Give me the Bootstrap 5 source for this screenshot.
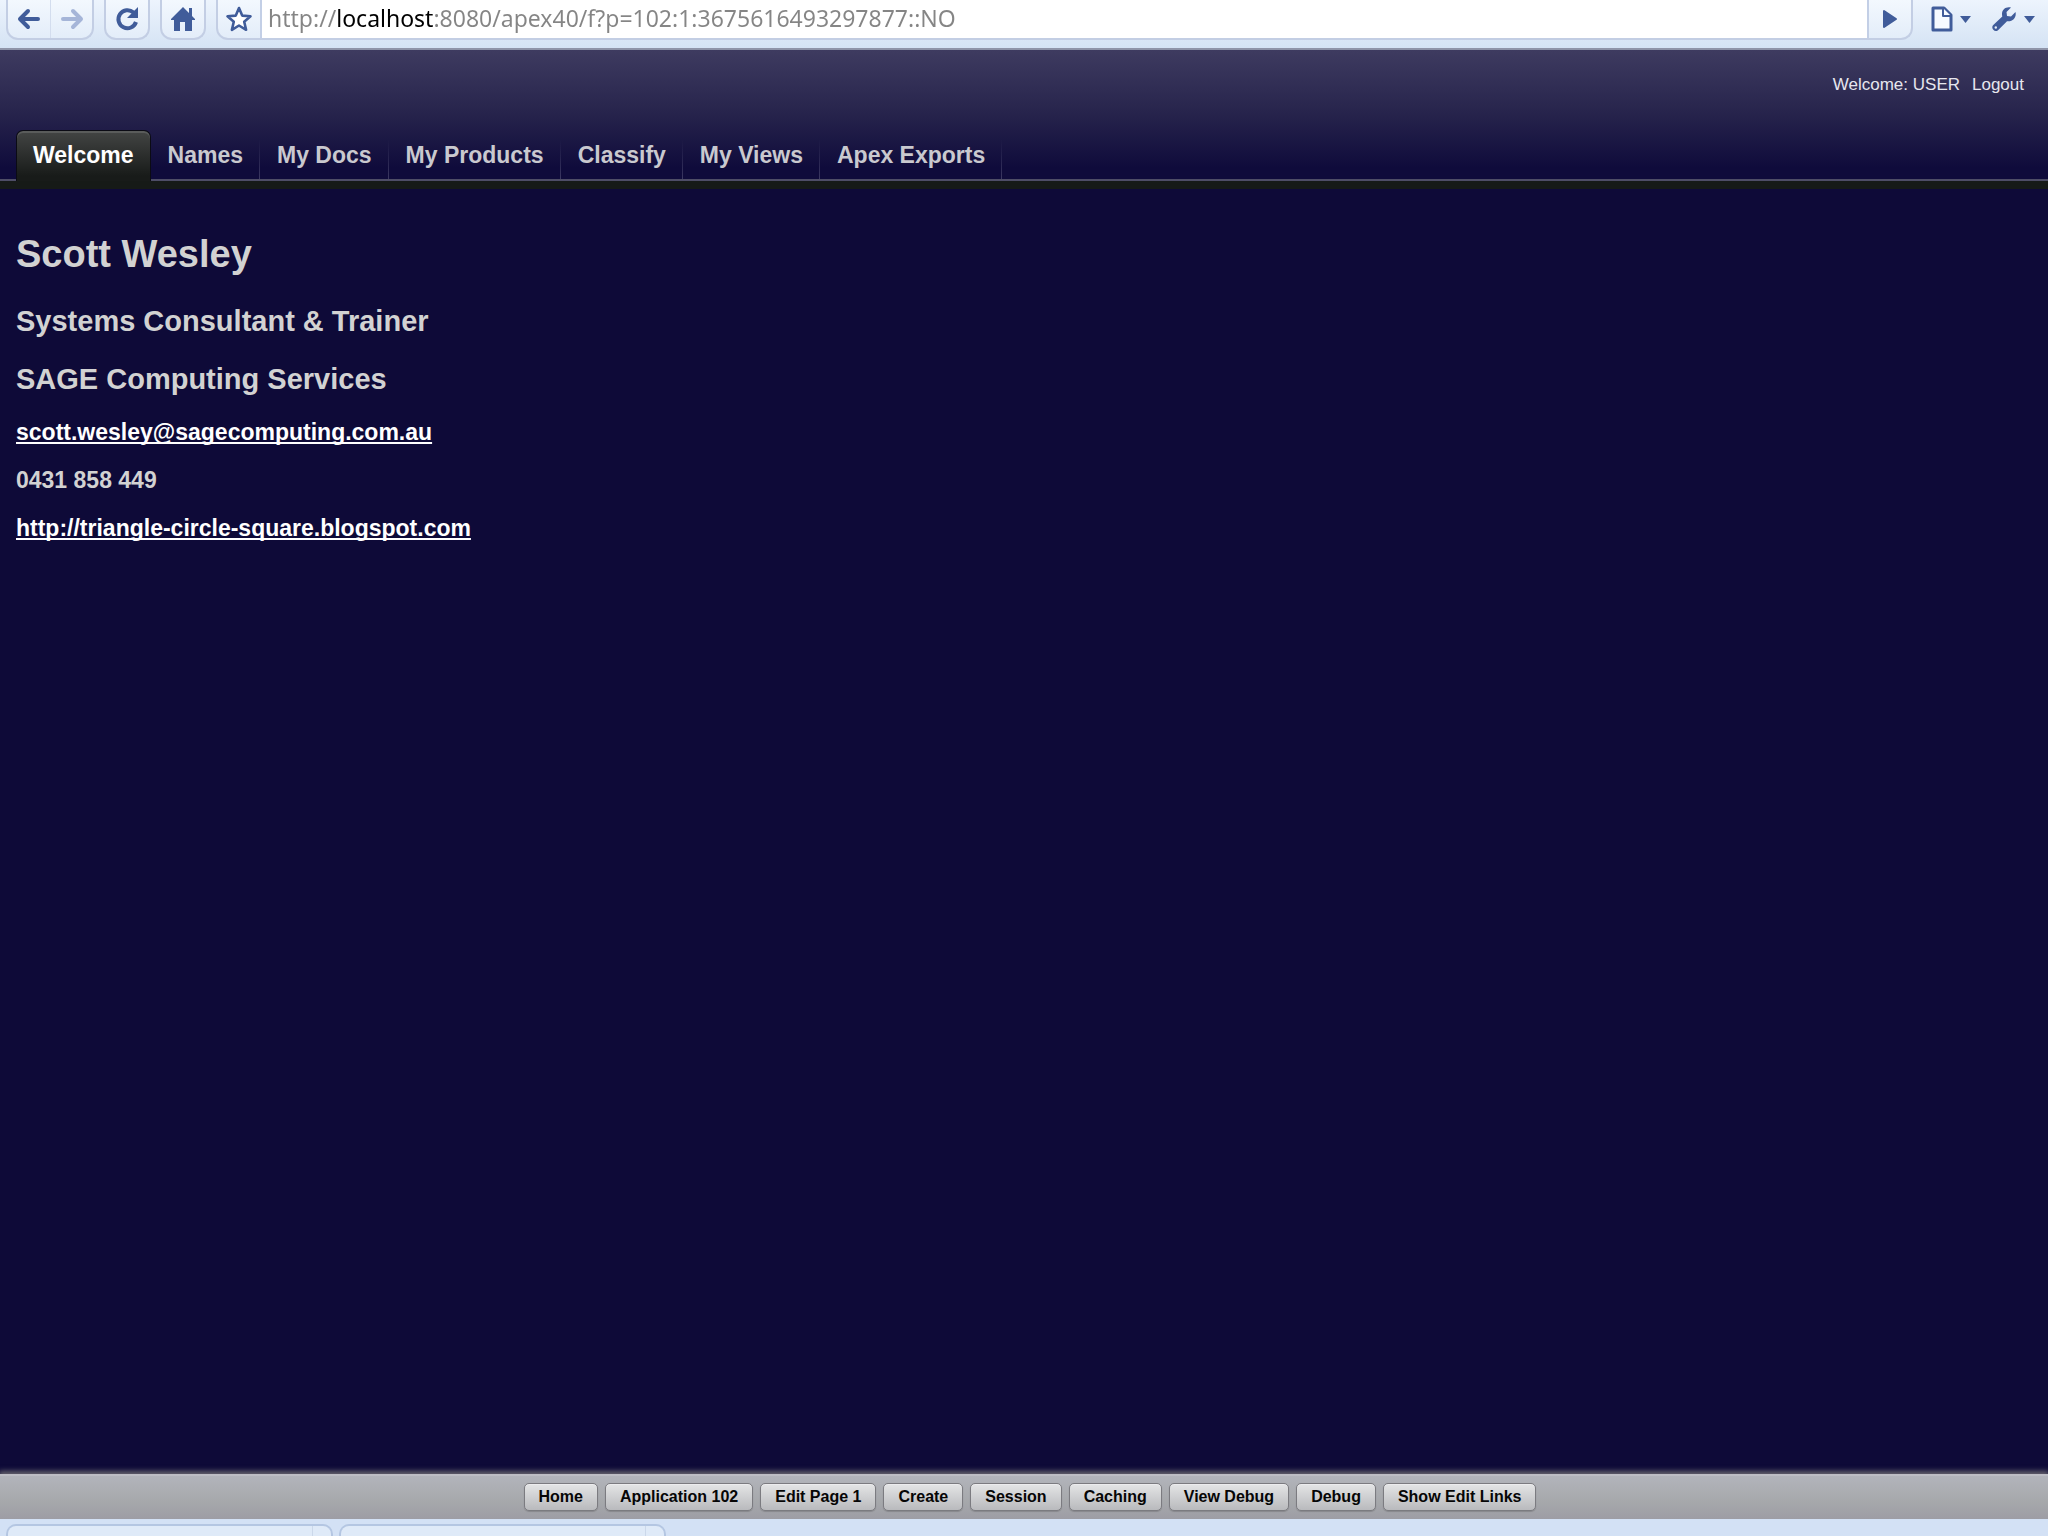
<!DOCTYPE html>
<html lang="en">
<head>
<meta charset="utf-8">
<meta name="viewport" content="width=device-width, initial-scale=1">
<title>Welcome</title>
<link href="https://cdn.jsdelivr.net/npm/bootstrap@5.3.0/dist/css/bootstrap.min.css" rel="stylesheet">
<style>
  body { font-family: "Liberation Sans", Arial, sans-serif; background: #0e0a38; color: #d2d2d2; }

  /* browser toolbar */
  .chrome-bar { height: 50px; background: linear-gradient(#edf4fd, #d5e3f4); border-bottom: 2px solid #8f94a8; padding: 0 13px 0 6px; gap: 10px; }
  .tool-group { height: 40px; border: 2px solid #c3cee4; border-top: 0; border-radius: 0 0 12px 12px; background: linear-gradient(#f3f8fe, #e3edf9); overflow: hidden; }
  .tool-btn { height: 38px; width: 42px; padding: 0; border: 0; background: none; color: #405c9a; display: flex; align-items: center; justify-content: center; }
  .tool-btn + .tool-btn { border-left: 1px solid #d3ddee; }
  .tool-btn svg, .menu-btn svg { display: block; }
  .url-box { height: 38px; min-width: 0; border: 0; border-left: 2px solid #c3cfe6; border-right: 2px solid #c3cfe6; border-radius: 0; padding: 0 6px 2px; outline: 0; font-family: "Noto Sans", "Open Sans", sans-serif; font-size: 23px; }
  .url-wrap { background: #fff; }
  .url-text { color: transparent; background: linear-gradient(90deg, #858585 0 74px, #000 74px 171px, #858585 171px); -webkit-background-clip: text; background-clip: text; }
  .menu-btn { height: 38px; padding: 0; border: 0; background: none; color: #405c9a; display: flex; align-items: center; gap: 7px; }
  .menu-set { gap: 20px; padding-left: 8px; }

  /* application header */
  .app-head { background: linear-gradient(#3e3b60 0, #28254d 60px, #0f0b3b 118px); border-bottom: 2px solid #4e4d66; }
  .user-bar { height: 80px; padding: 20px 24px 0; font-size: 17px; line-height: 30px; gap: 12px; color: #e6e6ee; }
  .user-bar a { color: inherit; text-decoration: none; line-height: 30px; }
  .tab-row { padding-left: 16px; margin-bottom: -2px; }
  .tab-row .nav-link { height: 49px; padding: 0 16px 0 17px; line-height: 50px; font-size: 23px; font-weight: bold; color: #c9c9cf; border-right: 1px solid; border-image: linear-gradient(transparent 20%, #3d3a63) 1; margin-bottom: 2px; white-space: nowrap; }
  .tab-row .nav-link.active { height: 51px; margin-bottom: 0; padding: 0 16px; border: 1px solid #0b0b14; border-bottom: 0; border-image: none; border-radius: 7px 7px 0 0; background: linear-gradient(#434544, #181b19 90%); box-shadow: inset 0 2px 0 #5a5c5b; color: #fff; line-height: 48px; }
  .band { height: 8px; background: #161a17; }

  /* business card */
  .person { padding: 32px 16px; }
  .person h1, .person h2, .person p { margin: 0; font-weight: bold; }
  .person h1 { font-size: 38px; line-height: 66px; padding-bottom: 5px; }
  .person h2 { font-size: 29px; line-height: 58px; }
  .person p { font-size: 23px; line-height: 48px; }
  .person a { color: #fff; text-decoration-thickness: 2px; text-underline-offset: 2px; text-decoration-skip-ink: none; }

  /* developer toolbar */
  .dev-bar { height: 45px; gap: 7px; padding: 0 0 2px 12px; background: linear-gradient(#b2b4bb, #a6a8ab 60%, #9d9da5); border-top: 2px solid #bdbdc4; box-shadow: 0 -2px 5px 1px #65636c; }
  .dev-btn { height: 28px; padding: 0 14px; border: 1px solid #7b7b80; border-radius: 5px; background: linear-gradient(#e4e5e6, #b9babd); box-shadow: 0 1px 1px #88888c, inset 0 1px 0 #ececee; font-size: 16px; font-weight: bold; line-height: 24px; color: #060606; }
  .shelf { height: 17px; padding: 5px 6px 0; gap: 6px; background: #d3e1f5; overflow: hidden; }
  .shelf-tab { width: 327px; height: 12px; border: 2px solid #b4c6e2; border-bottom: 0; border-radius: 10px 10px 0 0; background: #dfeaf8; padding-right: 18px; }
  .shelf-tab::after { content: ""; display: block; height: 12px; border-right: 1px solid #cbd8ea; }
</style>
<script src="https://cdn.jsdelivr.net/npm/bootstrap@5.3.0/dist/js/bootstrap.bundle.min.js"></script>
</head>
<body class="d-flex flex-column min-vh-100">

<div class="chrome-bar d-flex align-items-start">
  <div class="tool-group d-flex">
    <button class="tool-btn" type="button" aria-label="Back">
      <svg width="24" height="24" viewBox="0 0 24 24" fill="none" stroke="currentColor" stroke-width="4" stroke-linecap="round" stroke-linejoin="round"><path d="M11 4 3 12l8 8M4 12h17"/></svg>
    </button>
    <button class="tool-btn" type="button" aria-label="Forward">
      <svg width="24" height="24" viewBox="0 0 24 24" fill="none" stroke="#a5b5d8" stroke-width="4" stroke-linecap="round" stroke-linejoin="round"><path d="M13 4l8 8-8 8M20 12H3"/></svg>
    </button>
  </div>
  <div class="tool-group">
    <button class="tool-btn" type="button" aria-label="Reload">
      <svg width="26" height="26" viewBox="0 0 26 26" fill="none" stroke="currentColor" stroke-width="4"><path d="M19.500 6.500A9 9 0 1 0 22 16"/><path d="M24 1v11H13z" fill="currentColor" stroke="none"/></svg>
    </button>
  </div>
  <div class="tool-group">
    <button class="tool-btn" type="button" aria-label="Home page">
      <svg width="26" height="26" viewBox="0 0 26 26" fill="currentColor"><path d="M13 1 1 13v1h3v11h6v-9h5v9h7V14h3v-1l-3-3V2h-3v5z"/></svg>
    </button>
  </div>
  <form class="tool-group d-flex flex-grow-1" onsubmit="return false">
    <button class="tool-btn" type="button" aria-label="Bookmark this page">
      <svg width="28" height="28" viewBox="0 0 28 28" fill="#fff" stroke="currentColor" stroke-width="2.600" stroke-linejoin="round"><path d="m14 3 3.200 7.600 8.300.7-6.300 5.400 1.900 8.100L14 20.500l-7.100 4.300 1.900-8.100-6.300-5.400 8.300-.7z"/></svg>
    </button>
    <div class="url-wrap d-flex flex-grow-1">
      <input class="url-box url-text flex-grow-1" type="text" aria-label="Address" spellcheck="false" value="http://localhost:8080/apex40/f?p=102:1:3675616493297877::NO">
    </div>
    <button class="tool-btn" type="submit" aria-label="Go">
      <svg width="16" height="20" viewBox="0 0 16 20" fill="currentColor" stroke="currentColor" stroke-width="2" stroke-linejoin="round"><path d="M2 2v16l12-8z"/></svg>
    </button>
  </form>
  <div class="menu-set d-flex">
    <button class="menu-btn" type="button" aria-label="Page menu">
      <svg width="22" height="26" viewBox="0 0 22 26" fill="#f6faff" stroke="currentColor" stroke-width="3" stroke-linejoin="round"><path d="M3 2h10l7 7v15H2V2z"/><path d="M12 2v8h8" stroke-width="2"/></svg>
      <svg width="11" height="7" viewBox="0 0 11 7" fill="currentColor"><path d="M0 0h11L5.500 7z"/></svg>
    </button>
    <button class="menu-btn" type="button" aria-label="Tools menu">
      <svg width="26" height="26" viewBox="0 0 26 26" fill="currentColor"><path d="M20 1.500 15.500 6l.5 4 4 .5L24.500 6c1.200 5-2.500 10-8.500 9.200L7 24.200c-3 2.800-7.500-1.500-5-5l9.300-8.700C9.800 4.500 14 .2 20 1.500z"/><circle cx="4.800" cy="21.500" r="1.200" fill="#e6effa"/></svg>
      <svg width="11" height="7" viewBox="0 0 11 7" fill="currentColor"><path d="M0 0h11L5.500 7z"/></svg>
    </button>
  </div>
</div>

<header class="app-head">
  <div class="user-bar d-flex justify-content-end">
    <span>Welcome: USER</span>
    <a href="#logout">Logout</a>
  </div>
  <nav class="nav tab-row flex-nowrap" aria-label="Main">
    <a class="nav-link active" aria-current="page" href="#welcome">Welcome</a>
    <a class="nav-link" href="#names">Names</a>
    <a class="nav-link" href="#docs">My Docs</a>
    <a class="nav-link" href="#products">My Products</a>
    <a class="nav-link" href="#classify">Classify</a>
    <a class="nav-link" href="#views">My Views</a>
    <a class="nav-link" href="#exports">Apex Exports</a>
  </nav>
</header>
<div class="band"></div>

<main class="person flex-grow-1">
  <h1>Scott Wesley</h1>
  <h2>Systems Consultant &amp; Trainer</h2>
  <h2>SAGE Computing Services</h2>
  <p><a href="mailto:scott.wesley@sagecomputing.com.au">scott.wesley@sagecomputing.com.au</a></p>
  <p>0431 858 449</p>
  <p><a href="http://triangle-circle-square.blogspot.com">http://triangle-circle-square.blogspot.com</a></p>
</main>

<footer>
  <div class="dev-bar d-flex justify-content-center align-items-center">
    <button class="dev-btn" type="button">Home</button>
    <button class="dev-btn" type="button">Application 102</button>
    <button class="dev-btn" type="button">Edit Page 1</button>
    <button class="dev-btn" type="button">Create</button>
    <button class="dev-btn" type="button">Session</button>
    <button class="dev-btn" type="button">Caching</button>
    <button class="dev-btn" type="button">View Debug</button>
    <button class="dev-btn" type="button">Debug</button>
    <button class="dev-btn" type="button">Show Edit Links</button>
  </div>
  <div class="shelf d-flex">
    <div class="shelf-tab"></div>
    <div class="shelf-tab"></div>
  </div>
</footer>

</body>
</html>
